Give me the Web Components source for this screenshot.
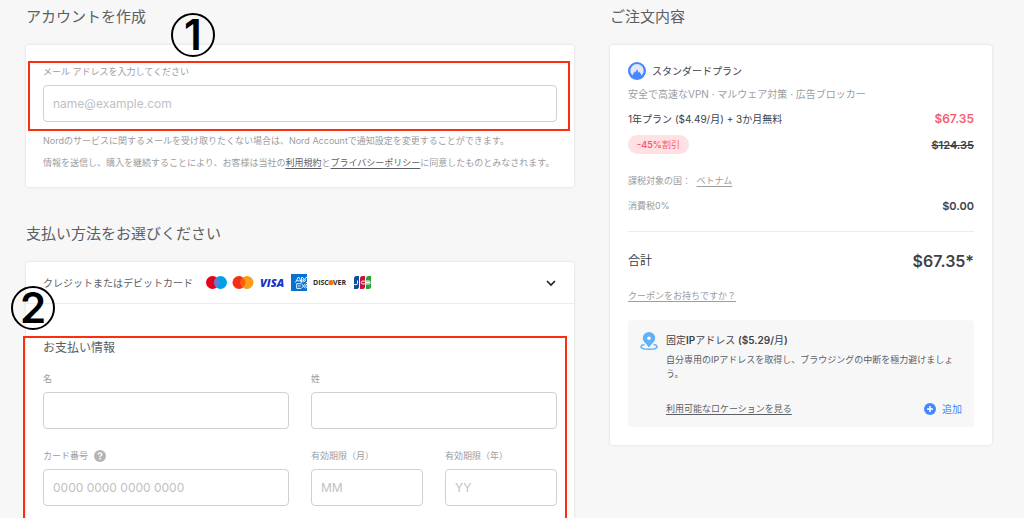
<!DOCTYPE html>
<html lang="ja">
<head>
<meta charset="utf-8">
<title>ご注文手続き</title>
<style>
  :root {
    --ink: #3e4148;
    --text: #5b5e64;
    --muted: #9b9da1;
    --line: #ebebec;
    --field: #cfd0d2;
    --blue: #4687ff;
    --red: #fb2e0e;
  }
  body {
    margin: 0;
    background: #f7f7f7;
    color: var(--text);
    font: 10px/16px Inter, "Noto Sans CJK JP", sans-serif;
  }
</style>
</head>
<body>
<checkout-page>
  <section-block slot="main" heading="アカウントを作成">
    <step-number digit="1"></step-number>
    <account-card></account-card>
  </section-block>
  <section-block slot="main" heading="支払い方法をお選びください">
    <payment-card></payment-card>
  </section-block>
  <section-block slot="side" heading="ご注文内容">
    <order-card></order-card>
  </section-block>
</checkout-page>

<script>
function define(name, html, setup) {
  const template = document.createElement('template');
  template.innerHTML = '<style>*{box-sizing:border-box}p,h2,h3{margin:0;font-weight:400}</style>' + html.trim().replace('</style>\n', '</style>').replace(/<\/style>\s+/, '</style>');
  customElements.define(name, class extends HTMLElement {
    connectedCallback() {
      if (this.shadowRoot) return;
      const root = this.attachShadow({ mode: 'open' });
      root.append(template.content.cloneNode(true));
      if (setup) setup(this, root);
    }
  });
}

define('checkout-page', `
  <style>
    :host { display: grid; grid-template-columns: 548fr 382fr; column-gap: 36px; padding: 0 32px 0 26px; align-items: start; }
    main { display: grid; gap: 30px; min-width: 0; }
    aside { min-width: 0; }
  </style>
  <main><slot name="main"></slot></main>
  <aside><slot name="side"></slot></aside>`);

define('section-block', `
  <style>
    :host { display: block; position: relative; }
    h2 { font-size: 15px; line-height: 34px; margin-bottom: 11px; }
  </style>
  <h2></h2><slot></slot>`, (el, root) => {
    root.querySelector('h2').textContent = el.getAttribute('heading');
  });

define('surface-card', `
  <style>
    :host { display: block; background: #fff; border-radius: 3px; box-shadow: 0 0 3px rgba(0,0,0,.12); }
  </style>
  <slot></slot>`);

define('step-number', `
  <style>
    :host { position: absolute; z-index: 2; left: 145px; top: 13px; width: 44px; height: 44px; border: 2px solid #000; border-radius: 50%;
      box-sizing: border-box; display: flex; align-items: center; justify-content: center; color: #000; font-size: 42px; line-height: 40px; font-weight: 600; }
    :host([digit="2"]) { left: -15px; top: 24px; }
  </style>
  <span></span>`, (el, root) => {
    root.querySelector('span').textContent = el.getAttribute('digit');
  });

define('highlight-box', `
  <style>
    :host { display: block; position: relative; }
    .frame { position: absolute; inset: -4px -13px -9px -15px; border: 2px solid var(--red); pointer-events: none; }
    :host([wide]) .frame { inset: -2px -10px 0 -20px; }
  </style>
  <div class="frame"></div><slot></slot>`);

define('text-field', `
  <style>
    :host { display: block; min-width: 0; }
    .top { display: flex; align-items: center; gap: 6px; height: 14px; margin-bottom: 6px; color: var(--muted); font-size: 9px; line-height: 14px; }
    input { display: block; width: 100%; height: 37px; padding: 0 9px; border: 1px solid var(--field); border-radius: 4px; background: #fff; color: var(--ink); font: inherit; font-size: 12px; outline: 0; }
    input::placeholder { color: #c0c1c3; opacity: 1; }
  </style>
  <div class="top"><label for="box"></label><slot></slot></div>
  <input id="box" type="text">`, (el, root) => {
    root.querySelector('label').textContent = el.getAttribute('label');
    const box = root.querySelector('input');
    box.placeholder = el.getAttribute('placeholder') || '';
    box.type = el.getAttribute('type') || 'text';
  });

define('text-link', `
  <style>
    :host { display: inline; }
    a { color: inherit; text-decoration: underline; text-underline-offset: 2px; text-decoration-thickness: 1px; }
  </style>
  <a href="#"><slot></slot></a>`);

define('account-card', `
  <style>
    :host { display: block; }
    .body { padding: 20px 17px 17px; }
    p { font-size: 9px; line-height: 14px; color: var(--muted); margin-top: 8px; }
    highlight-box + p { margin-top: 12px; }
    text-link { color: var(--text); }
  </style>
  <surface-card><div class="body">
    <highlight-box><text-field type="email" label="メール アドレスを入力してください" placeholder="name@example.com"></text-field></highlight-box>
    <p>Nordのサービスに関するメールを受け取りたくない場合は、Nord Accountで通知設定を変更することができます。</p>
    <p>情報を送信し、購入を継続することにより、お客様は当社の<text-link>利用規約</text-link>と<text-link>プライバシーポリシー</text-link>に同意したものとみなされます。</p>
  </div></surface-card>`);

define('card-brands', `
  <style>
    :host { display: flex; align-items: center; }
    svg { display: block; flex: none; }
    text { font-family: "Open Sans", sans-serif; }
  </style>
  <svg width="165" height="17" viewBox="0 0 165 17" role="img" aria-label="対応カード">
    <circle cx="6.5" cy="8.5" r="6.5" fill="#eb001b"/><circle cx="14.5" cy="8.5" r="6.5" fill="#00a2e5"/>
    <path d="M10.5 3.4a6.5 6.5 0 0 1 0 10.2a6.5 6.5 0 0 1 0-10.2z" fill="#7375cf"/>
    <circle cx="33" cy="8.5" r="6.5" fill="#f2301a"/><circle cx="41" cy="8.5" r="6.5" fill="#f79e1b"/>
    <path d="M37 3.4a6.5 6.5 0 0 1 0 10.2a6.5 6.5 0 0 1 0-10.2z" fill="#ff5f00"/>
    <text x="54" y="12.5" font-size="11" font-weight="800" font-style="italic" fill="#1a34c8">VISA</text>
    <rect x="85" y="0" width="16" height="17" fill="#0870ce"/>
    <path fill="none" stroke="#fff" stroke-width=".9" d="M89.500 8.500l2.400-5h1.300l2.100 5M90.700 6.800h3.600M95.500 8.500v-5h1.300l1.700 2.600 1.300-2.600H101M97 8.500V5.600l1.500 2 1.500-2M101 8.500h-1M95 9.700h-4.300v4.700H95M92 12h2.700M95.500 9.700l4 4.700M99.500 9.700l-4 4.700M101 9.900l-1.600 2.100 1.600 2"/>
    <g font-size="7" font-weight="700" fill="#2c2a29"><text x="107" y="11">DISC</text><text x="127" y="11">VER</text></g>
    <circle cx="125" cy="8.500" r="2.600" fill="#f47216"/>
    <path d="M148 4.500q0-2.500 2.500-2.500H153v10.500q0 2.500-2.500 2.500H148z" fill="#0b4ea2"/>
    <path d="M154 4.500q0-2.500 2.500-2.500H159v10.500q0 2.500-2.500 2.500H154z" fill="#c4123f"/>
    <path d="M160 4.500q0-2.500 2.500-2.500H165v10.500q0 2.500-2.500 2.500H160z" fill="#2c9f38"/>
    <path d="M151.500 6.500v3q0 1.200-1.500 1.200t-2-.5M158.900 7.200q-3.700-1-3.700 1.300t3.700 1.300M160 7h3.500q1 .7 0 1.400H160h3.700q1 .8 0 1.600H160" fill="none" stroke="#fff" stroke-width="1"/>
  </svg>`);

define('payment-card', `
  <style>
    :host { display: block; position: relative; }
    button { display: flex; align-items: center; width: 100%; height: 42px; padding: 0 17px; border: 0; border-bottom: 1px solid var(--line); background: none; color: inherit; font: inherit; text-align: left; }
    card-brands { margin-left: 13px; }
    .chevron { margin-left: auto; }
    .body { padding: 34px 17px 0; }
    h3 { font-size: 12px; line-height: 20px; margin-bottom: 14px; }
    form { display: grid; grid-template-columns: 1fr 1fr; gap: 20px 22px; padding-bottom: 60px; }
    .dates { display: grid; grid-template-columns: 1fr 1fr; gap: 22px; }
  </style>
  <surface-card>
    <button type="button" aria-expanded="true">クレジットまたはデビットカード<card-brands></card-brands>
      <svg class="chevron" width="12" height="8" viewBox="0 0 12 8"><path d="M2 2l4 4 4-4" fill="none" stroke="#222428" stroke-width="1.700"/></svg>
    </button>
    <div class="body"><highlight-box wide>
      <h3>お支払い情報</h3>
      <form>
        <text-field label="名"></text-field>
        <text-field label="姓"></text-field>
        <text-field label="カード番号" placeholder="0000 0000 0000 0000">
          <svg width="12" height="12" viewBox="0 0 12 12" style="display:block"><circle cx="6" cy="6" r="6" fill="#b4b5b7"/><path d="M4.200 4.700q0-1.900 1.800-1.900t1.800 1.600q0 .9-.9 1.400T6 7.200" fill="none" stroke="#fff" stroke-width="1.300"/><circle cx="6" cy="8.900" r=".8" fill="#fff"/></svg>
        </text-field>
        <div class="dates">
          <text-field label="有効期限（月）" placeholder="MM"></text-field>
          <text-field label="有効期限（年）" placeholder="YY"></text-field>
        </div>
      </form>
    </highlight-box></div>
  </surface-card>
  <step-number digit="2"></step-number>`);

define('price-row', `
  <style>
    :host { display: flex; align-items: center; justify-content: space-between; }
    .end { color: var(--ink); font-weight: 600; font-size: 11px; }
    :host([sale]) .end { color: #f75a6e; font-size: 12px; }
    :host([total]) { font-size: 12px; }
    :host([total]) .end { font-size: 16px; }
  </style>
  <span><slot></slot></span><span class="end"><slot name="price"></slot></span>`);

define('addon-box', `
  <style>
    :host { display: grid; grid-template-columns: 18px 1fr; column-gap: 8px; padding: 12px 12px 10px; background: #f7f7f8; border-radius: 4px; }
    h3 { font-size: 10px; line-height: 16px; color: var(--ink); }
    b { font-weight: 600; }
    p { font-size: 9px; line-height: 14px; margin-top: 5px; }
    footer { display: flex; justify-content: space-between; align-items: center; height: 16px; margin-top: 20px; font-size: 9px; }
    button { display: flex; align-items: center; gap: 6px; padding: 0; border: 0; background: none; color: var(--blue); font: inherit; font-size: 10px; }
  </style>
  <svg width="18" height="18" viewBox="0 0 18 18"><path d="M4.500 12.600C2.300 13 1 13.800 1 14.700c0 1.500 3.600 2.500 8 2.500s8-1 8-2.500c0-.9-1.300-1.700-3.500-2.100" fill="none" stroke="#62b0f8" stroke-width="1.500"/><path d="M9 0a6.200 6.200 0 0 0-6.200 6.200c0 3.800 3.700 5.300 6.200 9.300 2.500-4 6.200-5.500 6.200-9.300A6.200 6.200 0 0 0 9 0z" fill="#62b0f8"/><circle cx="9" cy="6.200" r="1.700" fill="#fff"/></svg>
  <div>
    <h3>固定<b>IP</b>アドレス <b>($5.29/</b>月<b>)</b></h3>
    <p>自分専用のIPアドレスを取得し、ブラウジングの中断を極力避けましょう。</p>
    <footer><text-link>利用可能なロケーションを見る</text-link>
      <button type="button"><svg width="12" height="12" viewBox="0 0 12 12"><circle cx="6" cy="6" r="6" fill="#4687ff"/><path d="M6 3v6M3 6h6" stroke="#fff" stroke-width="1.500"/></svg>追加</button>
    </footer>
  </div>`);

define('order-card', `
  <style>
    :host { display: block; }
    .body { padding: 17px 18px 18px; }
    h3 { display: flex; align-items: center; gap: 6px; height: 18px; font-size: 10px; color: var(--ink); }
    .sub { color: var(--muted); margin: 6px 0 8px; }
    price-row { height: 18px; }
    .plan { color: var(--ink); }
    .pill { display: block; padding: 0 9px; border-radius: 10px; line-height: 19px; font-size: 9px; background: #ffe0e3; color: #f75a6e; }
    .pill b { font-weight: 600; }
    .cut { height: 19px; margin: 7px 0 20px; }
    .tax { color: var(--muted); font-size: 9px; line-height: 14px; }
    .tax text-link { margin-left: 3px; }
    .vat { color: var(--muted); font-size: 9px; margin: 9px 0 16px; }
    hr { border: 0; border-top: 1px solid var(--line); margin: 0; }
    .sum { height: 20px; margin: 19px 0 18px; color: var(--ink); }
    .coupon { font-size: 9px; line-height: 14px; color: var(--muted); margin-bottom: 17px; }
  </style>
  <surface-card><div class="body">
    <h3><svg width="18" height="18" viewBox="0 0 18 18"><circle cx="9" cy="9" r="9" fill="#4687ff"/><path d="M4.300 13.400A6.700 6.700 0 1 1 13.700 13.400L11.500 9.700l-.7 1.100L9 7.300 7.200 10.500l-.7-1z" fill="#e3e7ef"/></svg>スタンダードプラン</h3>
    <p class="sub">安全で高速なVPN · マルウェア対策 · 広告ブロッカー</p>
    <price-row class="plan" sale>1年プラン ($4.49/月) + 3か月無料<span slot="price">$67.35</span></price-row>
    <price-row class="cut"><span class="pill"><b>-45%</b>割引</span><s slot="price">$124.35</s></price-row>
    <p class="tax">課税対象の国： <text-link>ベトナム</text-link></p>
    <price-row class="vat">消費税0%<span slot="price">$0.00</span></price-row>
    <hr>
    <price-row class="sum" total>合計<span slot="price">$67.35*</span></price-row>
    <p class="coupon"><text-link>クーポンをお持ちですか？</text-link></p>
    <addon-box></addon-box>
  </div></surface-card>`);
</script>
</body>
</html>
